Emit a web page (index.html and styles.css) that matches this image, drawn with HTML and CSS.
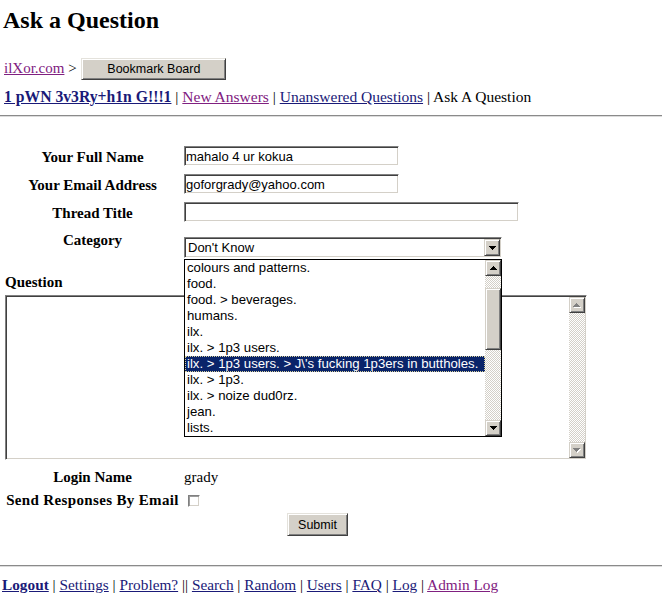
FILE: index.html
```html
<!DOCTYPE html>
<html lang="en">
<head>
<meta charset="utf-8">
<title>Ask a Question</title>
<link rel="stylesheet" href="styles.css">
</head>
<body>
<h1 class="title">Ask a Question</h1>
<div class="crumbs"><a class="visited" href="#">ilXor.com</a> &gt; <button class="btn bookmark" type="button">Bookmark Board</button></div>
<div class="nav"><a class="strong" href="#">1 pWN 3v3Ry+h1n G!!!1</a> | <a class="visited" href="#">New Answers</a> | <a href="#">Unanswered Questions</a> | Ask A Question</div>
<hr class="rule">
<form class="ask">
  <div class="row field">
    <label class="lbl">Your Full Name</label>
    <input class="text short" type="text" value="mahalo 4 ur kokua">
  </div>
  <div class="row field">
    <label class="lbl">Your Email Address</label>
    <input class="text short" type="text" value="goforgrady@yahoo.com">
  </div>
  <div class="row field">
    <label class="lbl">Thread Title</label>
    <input class="text long" type="text" value="">
  </div>
  <div class="row cat-row">
    <label class="lbl">Category</label>
    <div class="combo">
      <div class="combo-val">Don't Know</div>
      <div class="sb-btn"><svg width="7" height="4" viewBox="0 0 7 4"><path d="M0 0h7v1h-7zM1 1h5v1h-5zM2 2h3v1h-3zM3 3h1v1h-1z" fill="#000"/></svg></div>
      <div class="listbox">
        <div class="opts">
          <div class="opt">colours and patterns.</div>
          <div class="opt">food.</div>
          <div class="opt">food. &gt; beverages.</div>
          <div class="opt">humans.</div>
          <div class="opt">ilx.</div>
          <div class="opt">ilx. &gt; 1p3 users.</div>
          <div class="opt sel">ilx. &gt; 1p3 users. &gt; J\'s fucking 1p3ers in buttholes.</div>
          <div class="opt">ilx. &gt; 1p3.</div>
          <div class="opt">ilx. &gt; noize dud0rz.</div>
          <div class="opt">jean.</div>
          <div class="opt">lists.</div>
        </div>
        <div class="sb">
          <div class="sb-btn"><svg width="7" height="4" viewBox="0 0 7 4"><path d="M3 0h1v1h-1zM2 1h3v1h-3zM1 2h5v1h-5zM0 3h7v1h-7z" fill="#000"/></svg></div>
          <div class="sb-track"><div class="sb-thumb"></div></div>
          <div class="sb-btn"><svg width="7" height="4" viewBox="0 0 7 4"><path d="M0 0h7v1h-7zM1 1h5v1h-5zM2 2h3v1h-3zM3 3h1v1h-1z" fill="#000"/></svg></div>
        </div>
      </div>
    </div>
  </div>
  <label class="q-label">Question</label>
  <div class="qbox">
    <div class="qtext"></div>
    <div class="sb">
      <div class="sb-btn"><svg width="8" height="5" viewBox="0 0 8 5"><path d="M4 1h1v1h-1zM3 2h3v1h-3zM2 3h5v1h-5zM1 4h7v1h-7z" fill="#fff"/><path d="M3 0h1v1h-1zM2 1h3v1h-3zM1 2h5v1h-5zM0 3h7v1h-7z" fill="#808080"/></svg></div>
      <div class="sb-track"></div>
      <div class="sb-btn"><svg width="8" height="5" viewBox="0 0 8 5"><path d="M1 1h7v1h-7zM2 2h5v1h-5zM3 3h3v1h-3zM4 4h1v1h-1z" fill="#fff"/><path d="M0 0h7v1h-7zM1 1h5v1h-5zM2 2h3v1h-3zM3 3h1v1h-1z" fill="#808080"/></svg></div>
    </div>
  </div>
  <div class="row login-row">
    <span class="lbl">Login Name</span>
    <span class="val">grady</span>
  </div>
  <div class="row send-row">
    <label class="lbl wide">Send Responses By Email</label>
    <span><input class="check" type="checkbox"></span>
  </div>
  <div class="submit-row">
    <button class="btn submit" type="button">Submit</button>
  </div>
</form>
<hr class="rule foot-rule">
<div class="footer"><a class="strong" href="#">Logout</a> | <a href="#">Settings</a> | <a href="#">Problem?</a> || <a href="#">Search</a> | <a href="#">Random</a> | <a href="#">Users</a> | <a href="#">FAQ</a> | <a href="#">Log</a> | <a class="visited" href="#">Admin Log</a></div>
</body>
</html>
```
FILE: styles.css
```css
* { box-sizing: border-box; }

html, body { background: #fff; }

body {
  margin: 0;
  padding: 0 0 0 3px;
  width: 662px;
  color: #000;
  font-family: "Liberation Serif", "Times New Roman", serif;
  font-size: 15px;
  line-height: 17px;
}

a { color: #1a1a78; text-decoration: underline; }
a.visited { color: #802080; }
a.strong { font-weight: bold; }

.title {
  margin: 6px 0 0;
  font-family: "Liberation Serif", "Times New Roman", serif;
  font-size: 24px;
  line-height: 28px;
  font-weight: bold;
}

.crumbs {
  margin-top: 23px;
  padding-left: 1px;
  height: 22px;
  line-height: 22px;
}

.btn {
  font-family: "Liberation Sans", Arial, sans-serif;
  font-size: 12.5px;
  color: #000;
  background: #d4d0c8;
  border: 1px solid;
  border-color: #e4e2dc #404040 #404040 #e4e2dc;
  box-shadow: inset 1px 1px 0 #fff, inset -1px -1px 0 #808080;
  padding: 0;
  border-radius: 0;
  vertical-align: baseline;
}

.bookmark { width: 145px; height: 22px; margin-left: 1px; }

.nav {
  margin-top: 9px;
  padding-left: 1px;
  font-size: 15.5px;
}
.nav a.strong { font-size: 15.7px; }

.rule {
  margin: 10px 0 0 -3px;
  width: 662px;
  height: 0;
  border: 0;
  border-top: 1px solid #8a8a8a;
  border-bottom: 1px solid #dcdcdc;
}

.ask {
  margin-top: 29px;
  padding-left: 2px;
  display: flex;
  flex-direction: column;
}

.row {
  display: grid;
  grid-template-columns: 175px auto;
  column-gap: 4px;
  align-items: center;
}

.field + .field { margin-top: 8px; }
.field .lbl { padding-top: 2px; }

.lbl { font-weight: bold; text-align: center; }
.lbl.wide { letter-spacing: 0.35px; white-space: nowrap; }

.text {
  appearance: none;
  height: 20px;
  margin: 0;
  padding: 0 1px;
  font-family: "Liberation Sans", Arial, sans-serif;
  font-size: 13px;
  color: #000;
  background: #fff;
  border: 1px solid;
  border-color: #808080 #fff #fff #808080;
  box-shadow: inset 1px 1px 0 #404040, inset -1px -1px 0 #d4d0c8;
  border-radius: 0;
  outline: none;
}
.text.short { width: 215px; }
.text.long { width: 335px; }

.cat-row { margin-top: 10px; align-items: start; }

.combo {
  position: relative;
  margin-top: 5px;
  width: 318px;
  height: 21px;
  display: flex;
  padding: 1px;
  border: 1px solid;
  border-color: #808080 #fff #fff #808080;
  box-shadow: inset 1px 1px 0 #404040, inset -1px -1px 0 #d4d0c8;
  font-family: "Liberation Sans", Arial, sans-serif;
  font-size: 13px;
}

.combo-val {
  flex: 1;
  padding-left: 2px;
  line-height: 18px;
  white-space: nowrap;
}

.sb-btn {
  width: 16px;
  height: 16px;
  flex: none;
  display: flex;
  align-items: center;
  justify-content: center;
  background: #d4d0c8;
  border: 1px solid;
  border-color: #d4d0c8 #404040 #404040 #d4d0c8;
  box-shadow: inset 1px 1px 0 #fff, inset -1px -1px 0 #808080;
}
.sb-btn svg { display: block; shape-rendering: crispEdges; }
.combo > .sb-btn { height: 17px; }

.listbox {
  position: absolute;
  z-index: 2;
  top: 21px;
  left: -1px;
  width: 318px;
  height: 178px;
  display: flex;
  background: #fff;
  border: 1px solid #000;
}

.opts { flex: 1; overflow: hidden; }

.opt {
  height: 16px;
  line-height: 16px;
  padding-left: 2px;
  white-space: nowrap;
  overflow: hidden;
  color: #000;
  font-size: 13.2px;
}
.opt.sel {
  background: #0a246a;
  color: #fff;
  outline: 1px dotted #d6cf9a;
  outline-offset: -1px;
}

.sb {
  width: 16px;
  display: flex;
  flex-direction: column;
  flex: none;
}

.sb-track {
  flex: 1;
  background-color: #fff;
  background-image: repeating-conic-gradient(#d4d0c8 0 25%, #fff 0 50%);
  background-size: 2px 2px;
}

.sb-thumb {
  margin-top: 12px;
  height: 62px;
  background: #d4d0c8;
  border: 1px solid;
  border-color: #d4d0c8 #404040 #404040 #d4d0c8;
  box-shadow: inset 1px 1px 0 #fff, inset -1px -1px 0 #808080;
}

.q-label {
  margin-top: 16px;
  font-weight: bold;
}

.qbox {
  margin-top: 4px;
  width: 582px;
  height: 165px;
  display: flex;
  padding: 1px;
  background: #fff;
  border: 1px solid;
  border-color: #808080 #fff #fff #808080;
  box-shadow: inset 1px 1px 0 #404040, inset -1px -1px 0 #d4d0c8;
}
.qtext { flex: 1; }

.login-row { margin-top: 9px; }
.send-row { margin-top: 6px; }

.check {
  appearance: none;
  display: block;
  width: 12px;
  height: 12px;
  margin: 0 0 0 4px;
  background: #fff;
  border: 1px solid;
  border-color: #808080 #fff #fff #808080;
  box-shadow: inset 1px 1px 0 #9a9a9a, inset -1px -1px 0 #d4d0c8;
  border-radius: 0;
}

.submit-row {
  margin-top: 4px;
  width: 625px;
  display: flex;
  justify-content: center;
}
.submit { width: 61px; height: 23px; }

.foot-rule { margin-top: 29px; }

.footer {
  margin-top: 9px;
  margin-left: -1px;
  font-size: 15.3px;
}
```
